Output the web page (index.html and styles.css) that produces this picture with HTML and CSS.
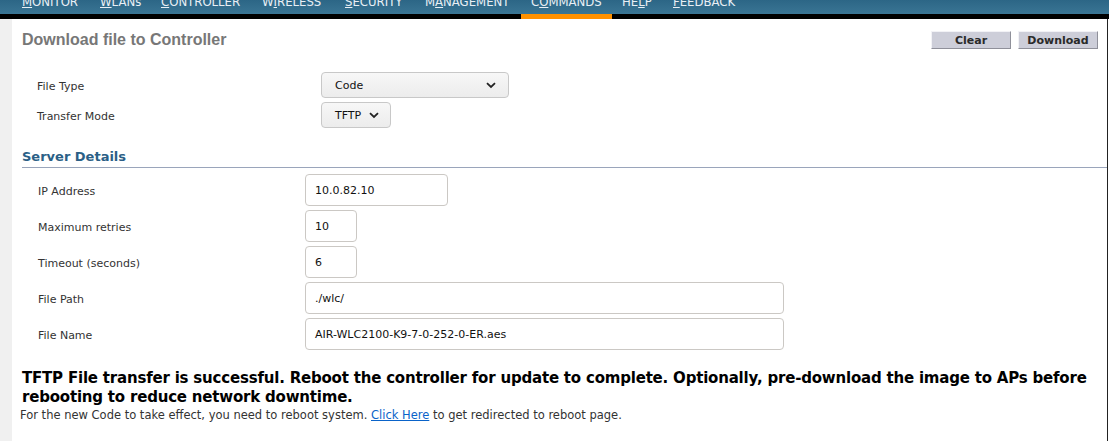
FILE: index.html
```html
<!DOCTYPE html>
<html>
<head>
<meta charset="utf-8">
<link rel="stylesheet" href="styles.css">
</head>
<body>
<div class="nav">
  <ul class="menu">
    <li class="m1"><u>M</u>ONITOR</li>
    <li class="m2"><u>W</u>LANs</li>
    <li class="m3"><u>C</u>ONTROLLER</li>
    <li class="m4">W<u>I</u>RELESS</li>
    <li class="m5"><u>S</u>ECURITY</li>
    <li class="m6">M<u>A</u>NAGEMENT</li>
    <li class="m7 active">C<u>O</u>MMANDS</li>
    <li class="m8">HE<u>L</u>P</li>
    <li class="m9"><u>F</u>EEDBACK</li>
  </ul>
</div>
<div class="page">
  <div class="strip"></div>
  <div class="content">
    <div class="header">
      <h1 class="title">Download file to Controller</h1>
      <div class="actions">
        <button class="btn">Clear</button>
        <button class="btn">Download</button>
      </div>
    </div>
    <div class="form1">
      <div class="row1">
        <span class="lbl">File Type</span>
        <div class="select wide"><span>Code</span><svg class="chev" viewBox="0 0 10 7" width="10" height="7"><path d="M1 1.2 L5 5 L9 1.2" fill="none" stroke="#222" stroke-width="1.8"/></svg></div>
      </div>
      <div class="row1">
        <span class="lbl">Transfer Mode</span>
        <div class="select narrow"><span>TFTP</span><svg class="chev" viewBox="0 0 10 7" width="10" height="7"><path d="M1 1.2 L5 5 L9 1.2" fill="none" stroke="#222" stroke-width="1.8"/></svg></div>
      </div>
    </div>
    <h2 class="section">Server Details</h2>
    <div class="form2">
      <div class="row2"><span class="lbl">IP Address</span><div class="input w-ip">10.0.82.10</div></div>
      <div class="row2"><span class="lbl">Maximum retries</span><div class="input w-sm">10</div></div>
      <div class="row2"><span class="lbl">Timeout (seconds)</span><div class="input w-sm">6</div></div>
      <div class="row2"><span class="lbl">File Path</span><div class="input w-lg">./wlc/</div></div>
      <div class="row2"><span class="lbl">File Name</span><div class="input w-lg">AIR-WLC2100-K9-7-0-252-0-ER.aes</div></div>
    </div>
    <p class="msg">TFTP File transfer is successful. Reboot the controller for update to complete. Optionally, pre-download the image to APs before rebooting to reduce network downtime.</p>
    <p class="note">For the new Code to take effect, you need to reboot system. <a href="#">Click Here</a> to get redirected to reboot page.</p>
  </div>
  <div class="edge"></div>
</div>
</body>
</html>
```

FILE: styles.css
```css
html, body {
  margin: 0;
  padding: 0;
  background: #ffffff;
  width: 1109px;
  height: 441px;
  overflow: hidden;
}
body {
  font-family: "DejaVu Sans", Verdana, sans-serif;
  color: #333;
}
.nav {
  height: 19px;
  background: linear-gradient(to bottom, #2c6686 0, #3a7594 14px, #000 14px, #000 19px);
  overflow: hidden;
}
.menu {
  list-style: none;
  margin: 0;
  padding: 0 0 0 22px;
  display: flex;
  height: 19px;
  font-size: 13px;
  color: #e9eff5;
  font-family: "DejaVu Sans Condensed", "DejaVu Sans", sans-serif;
}
.menu li {
  line-height: 14px;
  margin-top: -5px;
  position: relative;
  white-space: nowrap;
}
.m1 { width: 78px; }
.m2 { width: 61px; }
.m3 { width: 101px; }
.m4 { width: 83px; }
.m5 { width: 80px; }
.m6 { width: 106px; }
.m7 { width: 91px; }
.m8 { width: 51px; }
.active::after {
  content: "";
  position: absolute;
  left: -10px;
  width: 91px;
  top: 19px;
  height: 5px;
  background: #ff9100;
}
.page {
  display: flex;
  height: 422px;
}
.strip {
  width: 12px;
  background: #f0f0f0;
  flex: none;
}
.content {
  flex: 1;
  padding: 0 0 0 10px;
}
.edge {
  width: 1px;
  background: #222;
  margin-right: 1px;
  flex: none;
}
.header {
  display: flex;
  align-items: center;
  justify-content: space-between;
  height: 42px;
}
.title {
  margin: 0;
  font-family: "Liberation Sans", Arial, sans-serif;
  font-size: 16px;
  font-weight: bold;
  color: #777;
}
.actions {
  display: flex;
  gap: 7px;
  margin-right: 9px;
}
.btn {
  height: 18px;
  width: 80px;
  padding: 0;
  background: #cdced9;
  border: 1px solid;
  border-color: #f2f2f6 #8f909a #8f909a #f2f2f6;
  font-family: "DejaVu Sans", Verdana, sans-serif;
  font-size: 11px;
  font-weight: bold;
  color: #2a2a2a;
}
.form1 {
  padding-top: 11px;
  display: flex;
  flex-direction: column;
  gap: 4px;
}
.row1 {
  display: flex;
  align-items: center;
  height: 26px;
}
.row1 .lbl {
  width: 284px;
  padding-left: 15px;
}
.lbl {
  font-size: 11px;
  color: #333;
  padding-top: 2px;
}
.select {
  border: 1px solid #c8c8c8;
  border-radius: 4px;
  background: linear-gradient(#f7f7f7, #ececec);
  display: flex;
  align-items: center;
  justify-content: space-between;
  box-sizing: border-box;
  height: 26px;
  font-size: 11px;
  color: #111;
}
.select.wide { width: 188px; padding: 0 12px 0 13px; }
.select.narrow { width: 70px; padding: 0 11px 0 13px; }
.section {
  margin: 18px 0 0 0;
  font-size: 13px;
  font-weight: bold;
  color: #2b5f86;
  height: 21px;
  line-height: 21px;
  border-bottom: 1px solid #9aa5bb;
}
.form2 {
  padding-top: 6px;
  display: flex;
  flex-direction: column;
  gap: 4px;
}
.row2 {
  display: flex;
  align-items: center;
  height: 32px;
}
.row2 .lbl {
  width: 267px;
  padding-left: 16px;
}
.input {
  height: 32px;
  box-sizing: border-box;
  border: 1px solid #cbc8c4;
  border-radius: 4px;
  display: flex;
  align-items: center;
  padding-left: 9px;
  font-size: 11px;
  color: #111;
  background: #fff;
}
.w-ip { width: 143px; }
.w-sm { width: 52px; }
.w-lg { width: 479px; }
.msg {
  margin: 19px 0 0 0;
  font-size: 15px;
  font-weight: bold;
  color: #000;
  line-height: 19px;
  letter-spacing: -0.2px;
  padding-right: 4px;
}
.note {
  margin: 1px 0 0 -2px;
  font-size: 11.5px;
  color: #333;
  line-height: 14px;
}
.note a {
  color: #0a63c9;
}
```
